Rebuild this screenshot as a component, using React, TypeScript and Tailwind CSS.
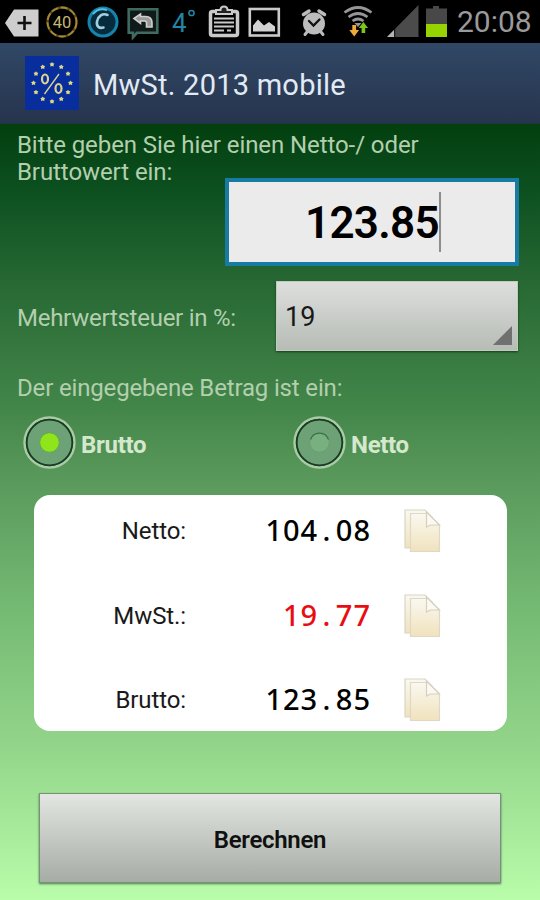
import React, { useState } from 'react';

interface ResultRow {
  label: string;
  whole: string;
  cents: string;
  highlight?: boolean;
}

const results: ResultRow[] = [
  { label: 'Netto:', whole: '104', cents: '08' },
  { label: 'MwSt.:', whole: '19', cents: '77', highlight: true },
  { label: 'Brutto:', whole: '123', cents: '85' },
];

const StatusBar: React.FC = () => (
  <div className="flex h-[43px] items-center bg-black">
    <svg className="h-[43px] w-[450px] shrink-0" viewBox="0 0 450 43">
      {/* Back tag */}
      <path d="M5 23 14 9.5h24.5v27H14z" fill="#cdcdcd" />
      <path d="M24.5 16v14M17.5 23h14" stroke="#111" strokeWidth="2.6" />
      {/* Battery percentage */}
      <circle cx="62" cy="22" r="14.5" fill="none" stroke="#5d4a16" strokeWidth="2.4" />
      <circle cx="62" cy="22" r="14.5" fill="none" stroke="#a58a35" strokeWidth="1.8" strokeDasharray="7 2.5" />
      <text x="62" y="27.5" textAnchor="middle" fontSize="16.5" fill="#c9b76d" className="font-['Roboto',sans-serif]">40</text>
      {/* Call app */}
      <circle cx="103" cy="22" r="14" fill="#062b3c" stroke="#1484ad" strokeWidth="3" />
      <path d="M93 14a13 13 0 0 1 14-4" fill="none" stroke="#55bfdf" strokeWidth="2" />
      <path d="M107.5 15c-5-2.500-9.500 1.500-10.500 6.500-.8 4.500 2 7.500 6.500 6" fill="none" stroke="#9fd0dd" strokeWidth="2.6" strokeLinecap="round" />
      {/* Reply bubble */}
      <path d="M128.700 9.200h28.600v23.600H137l-4 4.500v-4.500h-4.300z" fill="#101a18" stroke="#3f6a60" strokeWidth="2.600" />
      <path d="M134 18.500l6.500-4.500v2.500h5q6.500 0 6.500 6.500v4h-5.500v-4q0-2-2-2h-4v2.500z" fill="#999" stroke="#cfcfcf" strokeWidth="1.600" />
      {/* Temperature */}
      <text x="172" y="31.500" fontSize="26" fill="#2285a5" className="font-['Roboto',sans-serif]">4</text>
      <circle cx="191.500" cy="13" r="2.600" fill="none" stroke="#2285a5" strokeWidth="1.500" />
      {/* Clipboard */}
      <rect x="210.500" y="11.500" width="27" height="24" rx="2" fill="none" stroke="#cacaca" strokeWidth="3.500" />
      <path d="M216 14V10h4.500q0-3.500 3.500-3.500t3.500 3.500h4.500v4z" fill="#222" stroke="#cacaca" strokeWidth="2" />
      <path d="M214 18.500h20M214 22.500h20M214 26.500h20M214 30.500h10M227 30.500h4" stroke="#cacaca" strokeWidth="2" />
      {/* Gallery */}
      <rect x="249.800" y="9" width="29" height="26.500" fill="none" stroke="#cacaca" strokeWidth="2.600" />
      <path d="M253 31.500v-6l5-6 6 6 5-3.500 6 4.500v5z" fill="#d2d2d2" />
      {/* Alarm */}
      <g stroke="#bcbcbc" fill="none" strokeLinecap="round">
        <path d="M303.500 14.500l5.500-3.500M324.500 14.500L319 11" strokeWidth="3.500" />
        <path d="M307 32l-2 2.500M321 32l2 2.500" strokeWidth="3" />
        <circle cx="314" cy="23.500" r="11" fill="#bcbcbc" stroke="none" />
        <path d="M309 21l4.500 4.500 6-6" stroke="#111" strokeWidth="2.300" />
      </g>
      {/* Wifi with traffic arrows */}
      <g fill="none" stroke="#969696" strokeWidth="2.700">
        <path d="M344.500 12.500q13.500-10 27 0M348.500 17q9.500-7 19 0M352.500 21q5.500-4 11 0" />
      </g>
      <path d="M354.500 23h7l-3.500 4z" fill="#969696" />
      <path d="M352.300 25h3.800v5h3l-4.900 6.500-4.900-6.500h3z" fill="#f2a93b" />
      <path d="M361.600 33v-5h-2.800l4.600-6 4.600 6h-2.800v5z" fill="#7fc41c" />
      {/* Signal */}
      <path d="M387 37 418.500 5v32z" fill="#4b4b4b" />
      <path d="M387 37 394 30v7z" fill="#b5b5b5" />
      <path d="M394.700 29v8" stroke="#111" strokeWidth="1" />
      {/* Battery */}
      <path d="M426 8.500h7V6h6v2.500h8V24h-21z" fill="#484848" />
      <path d="M426 24h21v13h-21z" fill="#97d300" />
    </svg>
    <span className="ml-[7px] text-[30px] leading-none text-[#9a9a9a]">20:08</span>
  </div>
);

const stars = Array.from({ length: 12 }, (_, i) => {
  const angle = (i * Math.PI) / 6;
  return { x: 27 + 18.5 * Math.sin(angle), y: 27 - 18.5 * Math.cos(angle) };
});

const AppLogo: React.FC = () => (
  <svg className="size-[54px] shrink-0" viewBox="0 0 54 54">
    <rect width="54" height="54" rx="1" fill="#082d9c" />
    {stars.map((star, i) => (
      <path
        key={i}
        transform={`translate(${star.x} ${star.y})`}
        d="M0-2.500.9-1.200 2.400-1 1.500.400 1.700 2 0 1.500-1.700 2-1.500.400-2.400-1-.9-1.200z"
        fill="#ddd984"
      />
    ))}
    <g fill="none" stroke="#ddd391">
      <ellipse cx="20" cy="23" rx="3" ry="4.500" strokeWidth="2.200" />
      <ellipse cx="33.500" cy="32.500" rx="3" ry="4.500" strokeWidth="2.200" />
      <path d="M34 18 19.500 38" strokeWidth="1.300" />
    </g>
  </svg>
);

const RadioDot: React.FC<{ checked: boolean }> = ({ checked }) => (
  <svg className="size-[54px] shrink-0" viewBox="0 0 54 54">
    <circle cx="27.500" cy="27.500" r="25" fill="none" stroke="#a9cba5" strokeWidth="2.400" />
    <circle cx="27.500" cy="27.500" r="22.800" fill="#6da276" stroke="#183b22" strokeWidth="1.800" />
    <circle cx="27.500" cy="27.500" r="9.800" fill={checked ? '#8ee51c' : '#79b080'} stroke={checked ? '#66a64c' : '#6a9e73'} strokeWidth="1" />
    {!checked && <path d="M18.500 24.500a9.500 9.500 0 0 1 18 0" fill="none" stroke="#3d7048" strokeWidth="1.300" />}
  </svg>
);

const CopyIcon: React.FC = () => (
  <svg className="h-[44px] w-[37px]" viewBox="0 0 37 44">
    <defs>
      <linearGradient id="paper" x1="0" y1="0" x2="0" y2="1">
        <stop offset="0" stopColor="#faf8f0" />
        <stop offset="1" stopColor="#f0e2bd" />
      </linearGradient>
    </defs>
    <path d="M1 1h20l7 7v31H1z" fill="url(#paper)" stroke="#d8d6c4" strokeWidth="1.200" />
    <path d="M6.500 4.500H24L35.500 16v26.500h-29z" fill="url(#paper)" stroke="#ded9c6" strokeWidth="1.200" />
    <path d="M22.500 3V18l4-2h9z" fill="#fbf9f2" stroke="#d5d0bd" strokeWidth="1.200" />
  </svg>
);

const App: React.FC = () => {
  const [mode, setMode] = useState<'Brutto' | 'Netto'>('Brutto');

  return (
    <div className="flex h-[900px] w-[540px] flex-col overflow-hidden font-['Roboto',sans-serif]">
      <StatusBar />

      <header className="flex h-[81px] items-center border-b border-[#20383d] bg-linear-to-b from-[#304866] to-[#27344e] pl-[25px]">
        <AppLogo />
        <h1 className="ml-[14px] pt-[6px] text-[29px] tracking-[0.24px] text-[#e2eaf5]">MwSt. 2013 mobile</h1>
      </header>

      <main className="flex flex-1 flex-col bg-[linear-gradient(#033f0f_0%,#0c4f1f_8%,#286934_21%,#428549_36%,#58975a_45%,#74b973_62%,#92d58a_80%,#b9fca9_100%)] text-[#b3cfae]">
        <p className="h-[54px] pt-[8px] pl-[17px] text-[24px] leading-[27px] tracking-[-0.08px]">
          Bitte geben Sie hier einen Netto-/ oder
          <br />
          Bruttowert ein:
        </p>

        {/* Amount */}
        <div className="ml-[225px] flex h-[88px] w-[294px] shrink-0 items-center justify-end border-4 border-[#177ba4] bg-[#ebebeb] pr-[74px] text-black">
          <span className="pt-[2px] text-[44px] font-semibold tracking-[-0.7px]">123.85</span>
          <span className="h-[60px] w-[2px] bg-[#8d8d8d]" />
        </div>

        {/* Tax rate */}
        <div className="mt-[15px] flex h-[70px] shrink-0 items-center pl-[17px]">
          <span className="w-[259px] pt-[3px] text-[24px] tracking-[-0.26px]">Mehrwertsteuer in %:</span>
          <button className="flex h-full w-[242px] items-center justify-between border border-[#c0cdbd] bg-linear-to-b from-[#dddfdd] to-[#b7bcb6] pl-[8px] text-[27px] text-[#191919] shadow-[0_1px_2px_#17381b]">
            <span className="pt-[3px]">19</span>
            <svg className="mr-[5px] mb-[5px] size-[19px] self-end" viewBox="0 0 19 19">
              <path d="M0 19 19 0v19z" fill="#707070" />
            </svg>
          </button>
        </div>

        <p className="mt-[20px] pl-[17px] text-[24px] leading-[34px] tracking-[-0.16px]">Der eingegebene Betrag ist ein:</p>

        <div className="mt-[10px] flex h-[54px] shrink-0 pl-[22px] text-[24px] font-bold tracking-[-0.3px] text-[#d5e8ce]">
          <button className="flex w-[270px] items-center gap-[5px]" onClick={() => setMode('Brutto')}>
            <RadioDot checked={mode === 'Brutto'} />
            <span className="pt-[6px]">Brutto</span>
          </button>
          <button className="flex items-center gap-[5px]" onClick={() => setMode('Netto')}>
            <RadioDot checked={mode === 'Netto'} />
            <span className="pt-[6px]">Netto</span>
          </button>
        </div>

        {/* Results */}
        <section className="mt-[26px] ml-[34px] flex h-[236px] w-[473px] shrink-0 flex-col rounded-[16px] bg-white pt-[12px] text-[#191919]">
          {results.map((row) => (
            <div key={row.label} className="flex h-[84.5px] shrink-0 items-start last:h-[46px]">
              <span className="w-[152px] pt-px text-right text-[24px] leading-[46px] tracking-[-0.1px]">{row.label}</span>
              <span
                className={`w-[185px] text-right font-['Noto_Sans',sans-serif] text-[29px] leading-[46px] font-medium tracking-[1px] ${row.highlight ? 'text-[#e90d13]' : 'text-black'}`}
              >
                {row.whole}
                <span className="px-[4.4px]">.</span>
                {row.cents}
              </span>
              <button className="ml-[33px] pt-[2px]">
                <CopyIcon />
              </button>
            </div>
          ))}
        </section>

        <button className="mt-[62px] ml-[39px] h-[90px] w-[462px] border border-[#759276] bg-linear-to-b from-[#e3e6e2] to-[#a6ada5] pt-[3px] text-[24px] font-semibold tracking-[-0.3px] text-[#101010] shadow-[0_1px_2px_#537655]">
          Berechnen
        </button>
      </main>
    </div>
  );
};

export default App;
